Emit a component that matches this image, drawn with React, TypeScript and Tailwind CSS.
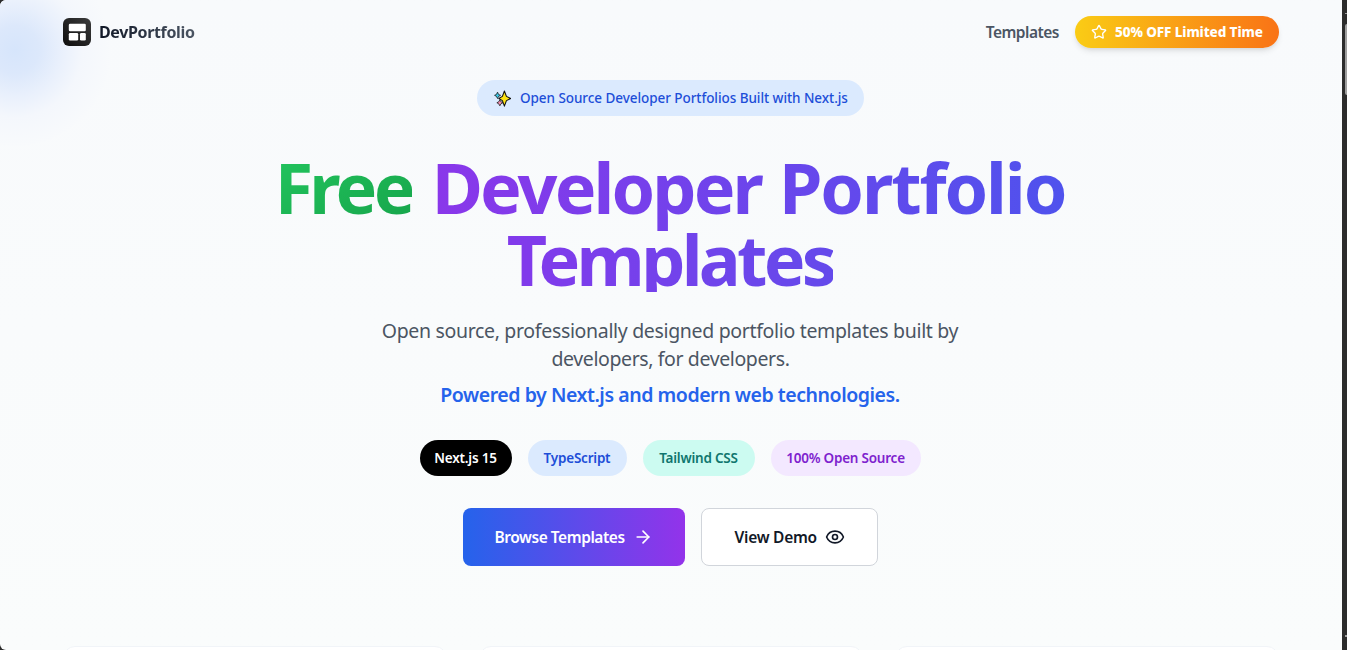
import { ArrowRight, Star, Eye } from "lucide-react";

function Sparkles() {
  return (
    <svg width="17" height="17" viewBox="0 0 16 16" className="shrink-0" strokeLinejoin="round">
      <path d="M9.800 1 L11.700 6 L15.700 8 L11.700 10 L9.800 15.200 L7.900 10 L4.500 8 L7.900 6Z" fill="#fde314" stroke="#111" strokeWidth="1" />
      <path d="M3.300 2 L4.300 4.200 L6.200 5 L4.300 6 L3.300 8 L2.300 6 L.5 5 L2.300 4.200Z" fill="#38c8e8" stroke="#111" strokeWidth=".7" />
      <path d="M5.500 9.200 L6.500 11.100 L8.400 12 L6.500 13 L5.500 14.900 L4.500 13 L2.700 12 L4.500 11.100Z" fill="#f58fb0" stroke="#111" strokeWidth=".7" />
    </svg>
  );
}

function Logo() {
  return (
    <svg width="28" height="28" viewBox="0 0 28 28" className="shrink-0">
      <defs>
        <linearGradient id="mark" x1="1" y1="0" x2="0" y2="1">
          <stop stopColor="#3c3c3c" />
          <stop offset="1" stopColor="#0c0c0c" />
        </linearGradient>
      </defs>
      <rect width="28" height="28" rx="6" fill="url(#mark)" />
      <rect x="5.800" y="5.800" width="17" height="7.500" rx="1.300" fill="#fff" />
      <rect x="5.800" y="15" width="9.400" height="7.500" rx="1.300" fill="#fff" />
      <rect x="17" y="15" width="5.800" height="7.500" rx="1.300" fill="#fff" />
    </svg>
  );
}

function Scrollbar() {
  return (
    <div className="flex w-[5px] shrink-0 flex-col bg-[#2c2c2c] pl-[3px]">
      <div className="mt-[13px] h-px w-[2px] bg-[#9f9f9f]" />
      <div className="mt-[10px] h-[71px] w-[2px] rounded-l-sm bg-[#9f9f9f]" />
      <div className="mt-[540px] h-[2px] w-[2px] bg-[#9f9f9f]" />
    </div>
  );
}

export default function App() {
  return (
    <div className="flex h-[650px] w-[1347px] overflow-hidden bg-[#2c2c2c] font-['Noto_Sans','Open_Sans',sans-serif] whitespace-nowrap">
      <div className="relative w-[1342px] shrink-0 overflow-hidden rounded-l-[6px] bg-linear-to-b from-[#f8fafc] to-[#fafcfc]">
        <div className="absolute -top-[46px] -left-[81px] h-[192px] w-[192px] rounded-full bg-[radial-gradient(closest-side,#d6e5fb_0%,#dce8fb_25%,#e9f0fc_48%,#f4f7fc_70%,#f8fafc_100%)]" />
        <div className="relative flex h-full flex-col">
          <header className="flex h-16 shrink-0 items-center justify-between px-[63px]">
            <div className="flex items-center gap-2">
              <Logo />
              <span className="bg-linear-to-r from-[#111827] to-[#4b5563] bg-clip-text text-[16px] font-bold tracking-[-0.36px] text-transparent">DevPortfolio</span>
            </div>
            <div className="flex items-center gap-4">
              <span className="pt-px text-[15.500px] font-semibold tracking-[-0.500px] text-[#4b5563]">Templates</span>
              <div className="flex h-8 w-[204px] items-center gap-2 rounded-full bg-linear-to-r/srgb from-[#facc15] to-[#f97316] px-4 text-white shadow-md">
                <Star size={16} />
                <span className="text-[13.500px] font-extrabold tracking-[-0.1px]">50% OFF Limited Time</span>
              </div>
            </div>
          </header>
          <main className="mt-4 flex shrink-0 flex-col items-center pr-[2px]">
            <div className="flex h-9 w-[387px] items-center gap-[9px] rounded-full bg-[#dbeafe] pl-[17.500px] text-[13.500px] font-medium tracking-[-0.060px] text-[#1d4ed8]">
              <Sparkles />
              <span>Open Source Developer Portfolios Built with Next.js</span>
            </div>
            <h1 className="mt-8 flex flex-col items-center text-[70px] leading-[78px] font-bold">
              <span className="flex h-[72px] items-start">
                <span className="mr-[20px] h-[86px] bg-linear-to-br/srgb from-[#22c55e] to-[#16a34a] bg-clip-text tracking-[-3.700px] text-transparent">Free</span>
                <span className="flex h-[86px] bg-linear-to-r/srgb from-[#8a37ea] to-[#4f52ed] bg-clip-text text-transparent">
                  <span className="mr-[18px] tracking-[-2.900px]">Developer</span>
                  <span className="tracking-[-2.100px]">Portfolio</span>
                </span>
              </span>
              <span className="h-[72px] bg-linear-to-r/srgb from-[#823aeb] to-[#644aeb] bg-clip-text tracking-[-3.700px] text-transparent">Templates</span>
            </h1>
            <p className="mt-[25px] text-center text-[19.500px] leading-7 tracking-[-0.33px] text-[#4b5563]">
              Open source, professionally designed portfolio templates built by
              <br />
              <span className="pl-px tracking-[-0.390px]">developers, for developers.</span>
            </p>
            <p className="mt-2 text-[19.500px] leading-7 font-semibold tracking-[-0.450px] text-[#2563eb]">Powered by Next.js and modern web technologies.</p>
            <div className="mt-[31px] flex gap-4 text-[13.500px] font-semibold tracking-[-0.220px]">
              <span className="flex h-9 w-[92px] items-center justify-center rounded-full bg-black text-white">Next.js 15</span>
              <span className="flex h-9 w-[99px] items-center justify-center rounded-full bg-[#dbeafe] text-[#1d4ed8]">TypeScript</span>
              <span className="flex h-9 w-[112px] items-center justify-center rounded-full bg-[#ccfbf1] text-[#0f766e]">Tailwind CSS</span>
              <span className="flex h-9 w-[150px] items-center justify-center rounded-full bg-[#f3e8ff] text-[#7e22ce]">100% Open Source</span>
            </div>
            <div className="mt-8 flex gap-4 text-[15.500px]">
              <button className="flex h-[58px] w-[222px] items-center gap-2 rounded-lg bg-linear-to-r/srgb from-[#2563eb] to-[#9333ea] pl-8 font-semibold tracking-[-0.450px] text-white">
                <span className="pt-px">Browse Templates</span>
                <ArrowRight size={20} />
              </button>
              <button className="flex h-[58px] w-[177px] items-center gap-2 rounded-lg border border-[#d1d5db] bg-white pl-[33px] font-semibold tracking-[-0.250px] text-[#111827]">
                <span className="pt-px">View Demo</span>
                <Eye size={20} />
              </button>
            </div>
          </main>
          <div className="mt-20 flex shrink-0 gap-8 px-[63px]">
            <div className="h-24 flex-1 rounded-xl border border-[#f1f4f8] bg-white" />
            <div className="h-24 flex-1 rounded-xl border border-[#f1f4f8] bg-white" />
            <div className="h-24 flex-1 rounded-xl border border-[#f1f4f8] bg-white" />
          </div>
        </div>
      </div>
      <Scrollbar />
    </div>
  );
}
